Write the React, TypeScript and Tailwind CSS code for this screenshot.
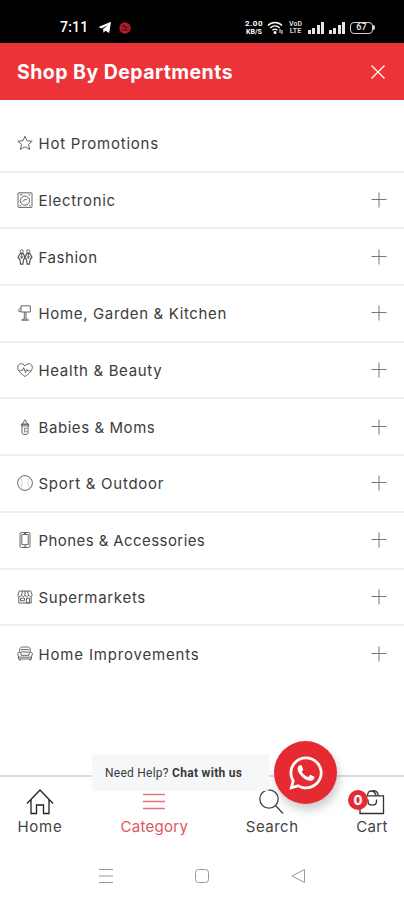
import type { ReactNode } from 'react';
import { FaWhatsapp } from 'react-icons/fa';

type Department = {
  name: string;
  spacing: string;
  icon: ReactNode;
  expandable?: boolean;
};

const departments: Department[] = [
  {
    name: 'Hot Promotions',
    spacing: 'tracking-[0.76px]',
    expandable: false,
    icon: <path d="M8 1.2 10 5.8 15.2 6.2 11.4 9.5 12.7 14.4 8 11.8 3.3 14.4 4.6 9.5 0.8 6.2 6 5.8Z" />,
  },
  {
    name: 'Electronic',
    spacing: 'tracking-[0.7px]',
    icon: (
      <>
        <rect x="1" y="0.8" width="14" height="14.6" rx="0.6" />
        <circle cx="8" cy="8.6" r="4.6" />
        <path d="M2.7 2.8h2.6M11.5 2.8h1.8M5.7 9.8C7 7 9 8 10.5 6.8M2.8 13.7h1.4M12 13.7h1.3" />
      </>
    ),
  },
  {
    name: 'Fashion',
    spacing: 'tracking-[0.55px]',
    icon: (
      <>
        <circle cx="4.7" cy="2.3" r="1.6" />
        <circle cx="11.2" cy="2.3" r="1.6" />
        <path d="M3 4.7 1 8.3l1.8 2.2.8 4.7h2.2L6.5 11 8 8.4 6.4 4.7ZM9.7 4.7 8 8.4l1.5 2.2.7 4.6h2.2l.8-4.7L15 8.3l-2-3.6Z" strokeWidth="1.2" />
        <path d="M4.7 5v5M11.3 5v5M3 8h3.5M9.8 8h3.5" />
      </>
    ),
  },
  {
    name: 'Home, Garden & Kitchen',
    spacing: 'tracking-[0.65px]',
    icon: <path d="M4 0.8h9.3V7H4ZM4 7 1 5.6 4 2.4M7.3 7v6.8M9 7v6.8M4.7 15.2c0-1.6 6.8-1.6 6.8 0Z" />,
  },
  {
    name: 'Health & Beauty',
    spacing: 'tracking-[0.66px]',
    icon: (
      <>
        <path d="M8 14.5C4 11.7.7 8.7.7 5.4.7 1.2 6 .5 8 4c2-3.5 7.3-2.8 7.3 1.4 0 3.3-3.3 6.3-7.3 9.1Z" />
        <path d="M2.5 8.3h3l1.2-2.6 1.8 5 1.3-3.3.8 1.4h3" />
      </>
    ),
  },
  {
    name: 'Babies & Moms',
    spacing: 'tracking-[0.57px]',
    icon: <path d="M7 3c0-3 2-3 2 0l2.2 2.2H4.8L7 3ZM4.3 5.2h7.4v1.7H4.3ZM5 6.9v7.2c0 1.8 6 1.8 6 0V6.9M7.8 8.5v5M9.3 9v1M9.3 12v1" />,
  },
  {
    name: 'Sport & Outdoor',
    spacing: 'tracking-[0.74px]',
    icon: (
      <>
        <circle cx="8" cy="8" r="7.4" />
        <path d="M3.3 2.4c2.2 3.5 2.2 7.7 0 11.2M12.7 2.4c-2.2 3.5-2.2 7.7 0 11.2" strokeWidth="0.5" strokeDasharray="1 0.8" />
      </>
    ),
  },
  {
    name: 'Phones & Accessories',
    spacing: 'tracking-[0.42px]',
    icon: (
      <>
        <rect x="3" y="0.5" width="10" height="15" rx="1.4" />
        <rect x="4.8" y="2.5" width="6.4" height="10.2" />
        <path d="M7 1.5h2M7 14.2h2" />
      </>
    ),
  },
  {
    name: 'Supermarkets',
    spacing: 'tracking-[0.7px]',
    icon: (
      <>
        <path d="M2.3 2h11.4L15.2 6c-.6 2-3 2-3.6 0-.6 2-3 2-3.6 0-.6 2-3 2-3.6 0-.6 2-3 2-3.6 0ZM1.8 7.5V14h12.4V7.5" />
        <path d="M5.8 2 4.4 6M8 2v4M10.2 2l1.4 4M3.5 9.2h4v2.5h-4ZM9.5 9.2h3V14h-3Z" />
      </>
    ),
  },
  {
    name: 'Home Improvements',
    spacing: 'tracking-[0.83px]',
    icon: (
      <>
        <path d="M3 6.5 2.7 3.8C2.7 1.8 4 1 5.6 1h4.8c1.6 0 2.9.8 2.9 2.8L13 6.5" />
        <path d="M4 9.3V8C4 5.6.6 5.8.6 8c0 1 .9 1.4.9 2.2V13h13v-2.8c0-.8.9-1.2.9-2.2 0-2.2-3.4-2.4-3.4 0v1.3ZM4 6h8M4 3.6h8M3 13v2M13 13v2M2 11.2h12" />
      </>
    ),
  },
];

function StatusBar() {
  return (
    <div className="flex h-[43px] shrink-0 items-center justify-between bg-black pt-3 pr-[29px] pl-[60px] text-white">
      <div className="flex items-center">
        <span className="w-[38px] font-['Roboto',sans-serif] text-[14px] font-medium tracking-[0.2px]">7:11</span>
        <svg className="h-[13px] w-[14px]" viewBox="0 0 14 13" fill="currentColor">
          <path d="M0.5 6 13 0.8 11.2 12 7.4 9.8 5.6 11.7 5 8.3 10 4 3.6 7.4Z" />
        </svg>
        <svg className="ml-[7px] h-3 w-3" viewBox="0 0 12 12" fill="none">
          <circle cx="6" cy="6" r="5.7" fill="#b81a28" />
          <path d="M2 4.5c3-2 5 2.5 8 .5M2.5 8c2-2 4 1.5 7-.5M5 2.5l2 6" stroke="#45101a" />
        </svg>
      </div>
      <div className="flex items-center">
        <div className="w-[20px] text-center font-['Roboto',sans-serif] font-bold">
          <div className="text-[8px] leading-[8px] tracking-[0.5px]">2.00</div>
          <div className="text-[7px] leading-[8px]">KB/S</div>
        </div>
        <svg className="ml-[3px] h-[14px] w-[17px]" viewBox="0 0 17 14" fill="none" stroke="currentColor" strokeWidth="1.4">
          <path d="M1 4.5c4-4 10-4 14 0M3.3 7c2.7-2.8 6.7-2.8 9.4 0M5.5 9.3c1.5-1.5 3.5-1.5 5 0" />
          <circle cx="8" cy="11.5" r="0.8" fill="currentColor" />
          <path d="M13 8v4M15 9v4" strokeWidth="1" />
        </svg>
        <div className="ml-[4px] w-[15px] text-center font-['Roboto',sans-serif] text-[7px] leading-[7px] font-bold text-neutral-300">
          <div>VoD</div>
          <div>LTE</div>
        </div>
        <SignalBars />
        <SignalBars />
        <div className="ml-[5px] flex items-center">
          <div className="flex h-[12px] w-[23px] items-center justify-center rounded-[4px] border border-neutral-300 font-['Roboto',sans-serif] text-[9px] font-bold text-neutral-300">
            67
          </div>
          <div className="h-[5px] w-[2px] rounded-r bg-neutral-300" />
        </div>
      </div>
    </div>
  );
}

function SignalBars() {
  return (
    <div className="ml-[5px] flex h-3 w-4 items-end justify-between">
      <div className="h-[4px] w-[3px] bg-neutral-200" />
      <div className="h-[6px] w-[3px] bg-neutral-200" />
      <div className="h-[9px] w-[3px] bg-neutral-200" />
      <div className="h-[12px] w-[3px] bg-neutral-200" />
    </div>
  );
}

function DepartmentRow({ name, spacing, icon, expandable = true }: Department) {
  return (
    <li className="flex h-[56.7px] items-center border-b-2 border-[#efefef] pr-[17px] pl-[17px] last:border-transparent">
      <svg className="h-4 w-4" viewBox="0 0 16 16" fill="none" stroke="#555" strokeWidth="0.9" strokeLinejoin="round">
        {icon}
      </svg>
      <span className={`ml-[5.5px] flex-1 pt-[2px] text-[15px] leading-5 whitespace-nowrap text-[#3c3c3c] ${spacing}`}>{name}</span>
      {expandable && (
        <svg className="h-4 w-4" viewBox="0 0 16 16" fill="none" stroke="#777">
          <path d="M8 0.5v15M0.5 7.5h15" />
        </svg>
      )}
    </li>
  );
}

function BottomNav() {
  return (
    <nav className="flex h-[66px] justify-between border-t-2 border-[#dedede] pt-3 pr-[16px] pl-[17px] text-[15px] leading-[21px] text-[#444]">
      <a className="flex w-[46px] flex-col items-center">
        <svg className="h-[27px] w-7" viewBox="0 0 28 27" fill="none" stroke="#222" strokeWidth="1.3">
          <path d="M1 14.5 14 1 27 14.5M5 11V24.5h5.5v-8.5h7v8.5H23V11" />
        </svg>
        <span className="tracking-[0.8px]">Home</span>
      </a>
      <a className="flex w-[68px] flex-col items-center text-[#e1565d]">
        <svg className="h-[27px] w-[22px]" viewBox="0 0 22 27" fill="none" stroke="#ed6f77" strokeWidth="1.7">
          <path d="M0 5.5h22M0 12.5h22M0 19.5h22" />
        </svg>
        <span className="tracking-[0.3px]">Category</span>
      </a>
      <a className="flex w-[53px] flex-col items-center">
        <svg className="h-[27px] w-[26px]" viewBox="0 0 26 27" fill="none" stroke="#444" strokeWidth="1.3">
          <circle cx="10" cy="10" r="9.2" />
          <path d="m16.5 16.5 7.5 8" />
        </svg>
        <span className="tracking-[0.5px]">Search</span>
      </a>
      <a className="relative flex w-[32px] flex-col items-center">
        <svg className="h-[27px] w-[26px]" viewBox="0 0 26 27" fill="none" stroke="#333" strokeWidth="1.3">
          <path d="M1 6.8h23.5v17.7H1Z" />
          <path d="M9 10.5v2c0 4.8 8.5 4.8 8.5 0v-2M8.5 6.5c0-6 7-6 8.5 0M13 2c3.5-1 6 .8 6.2 4.5" />
        </svg>
        <span className="absolute top-[1px] -left-[8px] flex h-5 w-5 items-center justify-center rounded-full bg-[#e52b31] text-[13px] font-extrabold text-white">
          0
        </span>
        <span className="tracking-[0.3px]">Cart</span>
      </a>
    </nav>
  );
}

export default function App() {
  return (
    <div className="relative flex h-[900px] w-[404px] flex-col overflow-hidden bg-white font-['Inter',sans-serif]">
      <StatusBar />

      {/* Header */}
      <header className="flex h-[57px] shrink-0 items-center justify-between bg-[#ec3338] pr-[19px] pl-[17px] text-white">
        <h1 className="pt-[2px] text-[19.5px] font-bold tracking-[0.45px] whitespace-nowrap">Shop By Departments</h1>
        <svg className="h-[14px] w-[14px]" viewBox="0 0 14 14" fill="none" stroke="currentColor" strokeWidth="1.2">
          <path d="m0.5 0.5 13 13M13.5 0.5l-13 13" />
        </svg>
      </header>

      {/* Departments */}
      <ul className="flex-1 pt-[16px]">
        {departments.map((department) => (
          <DepartmentRow key={department.name} {...department} />
        ))}
      </ul>

      <BottomNav />

      {/* System navigation */}
      <div className="flex h-[59px] shrink-0 items-start justify-between pt-[27px] pr-[98px] pl-[99px]">
        <svg className="h-4 w-[14px]" viewBox="0 0 14 16" fill="none" stroke="#999" strokeWidth="1.2">
          <path d="M0 1.5h14M0 8h14M0 14.5h14" />
        </svg>
        <svg className="h-4 w-4" viewBox="0 0 16 16" fill="none" stroke="#999">
          <rect x="1.5" y="1.5" width="13" height="13" rx="3" />
        </svg>
        <svg className="h-4 w-[15px]" viewBox="0 0 15 16" fill="none" stroke="#999" strokeLinejoin="round">
          <path d="M1 8 13.5 1.5v13Z" />
        </svg>
      </div>

      {/* Chat */}
      <div className="absolute top-[754px] left-[92px] flex h-[37px] w-[177px] items-center rounded-[3px] bg-[#f5f7f9] pl-[13px] font-['Roboto',sans-serif] text-[12px] whitespace-nowrap text-[#3a3a3a]">
        <span className="tracking-[0.25px]">
          Need Help? <b className="font-bold tracking-[0.3px]">Chat with us</b>
        </span>
      </div>
      <button className="absolute top-[741px] left-[274px] flex h-[63px] w-[63px] items-center justify-center rounded-full bg-[#e52b31] text-white shadow-[2px_6px_10px_rgba(0,0,0,0.2)]">
        <FaWhatsapp className="h-[38px] w-[38px]" />
      </button>
    </div>
  );
}
